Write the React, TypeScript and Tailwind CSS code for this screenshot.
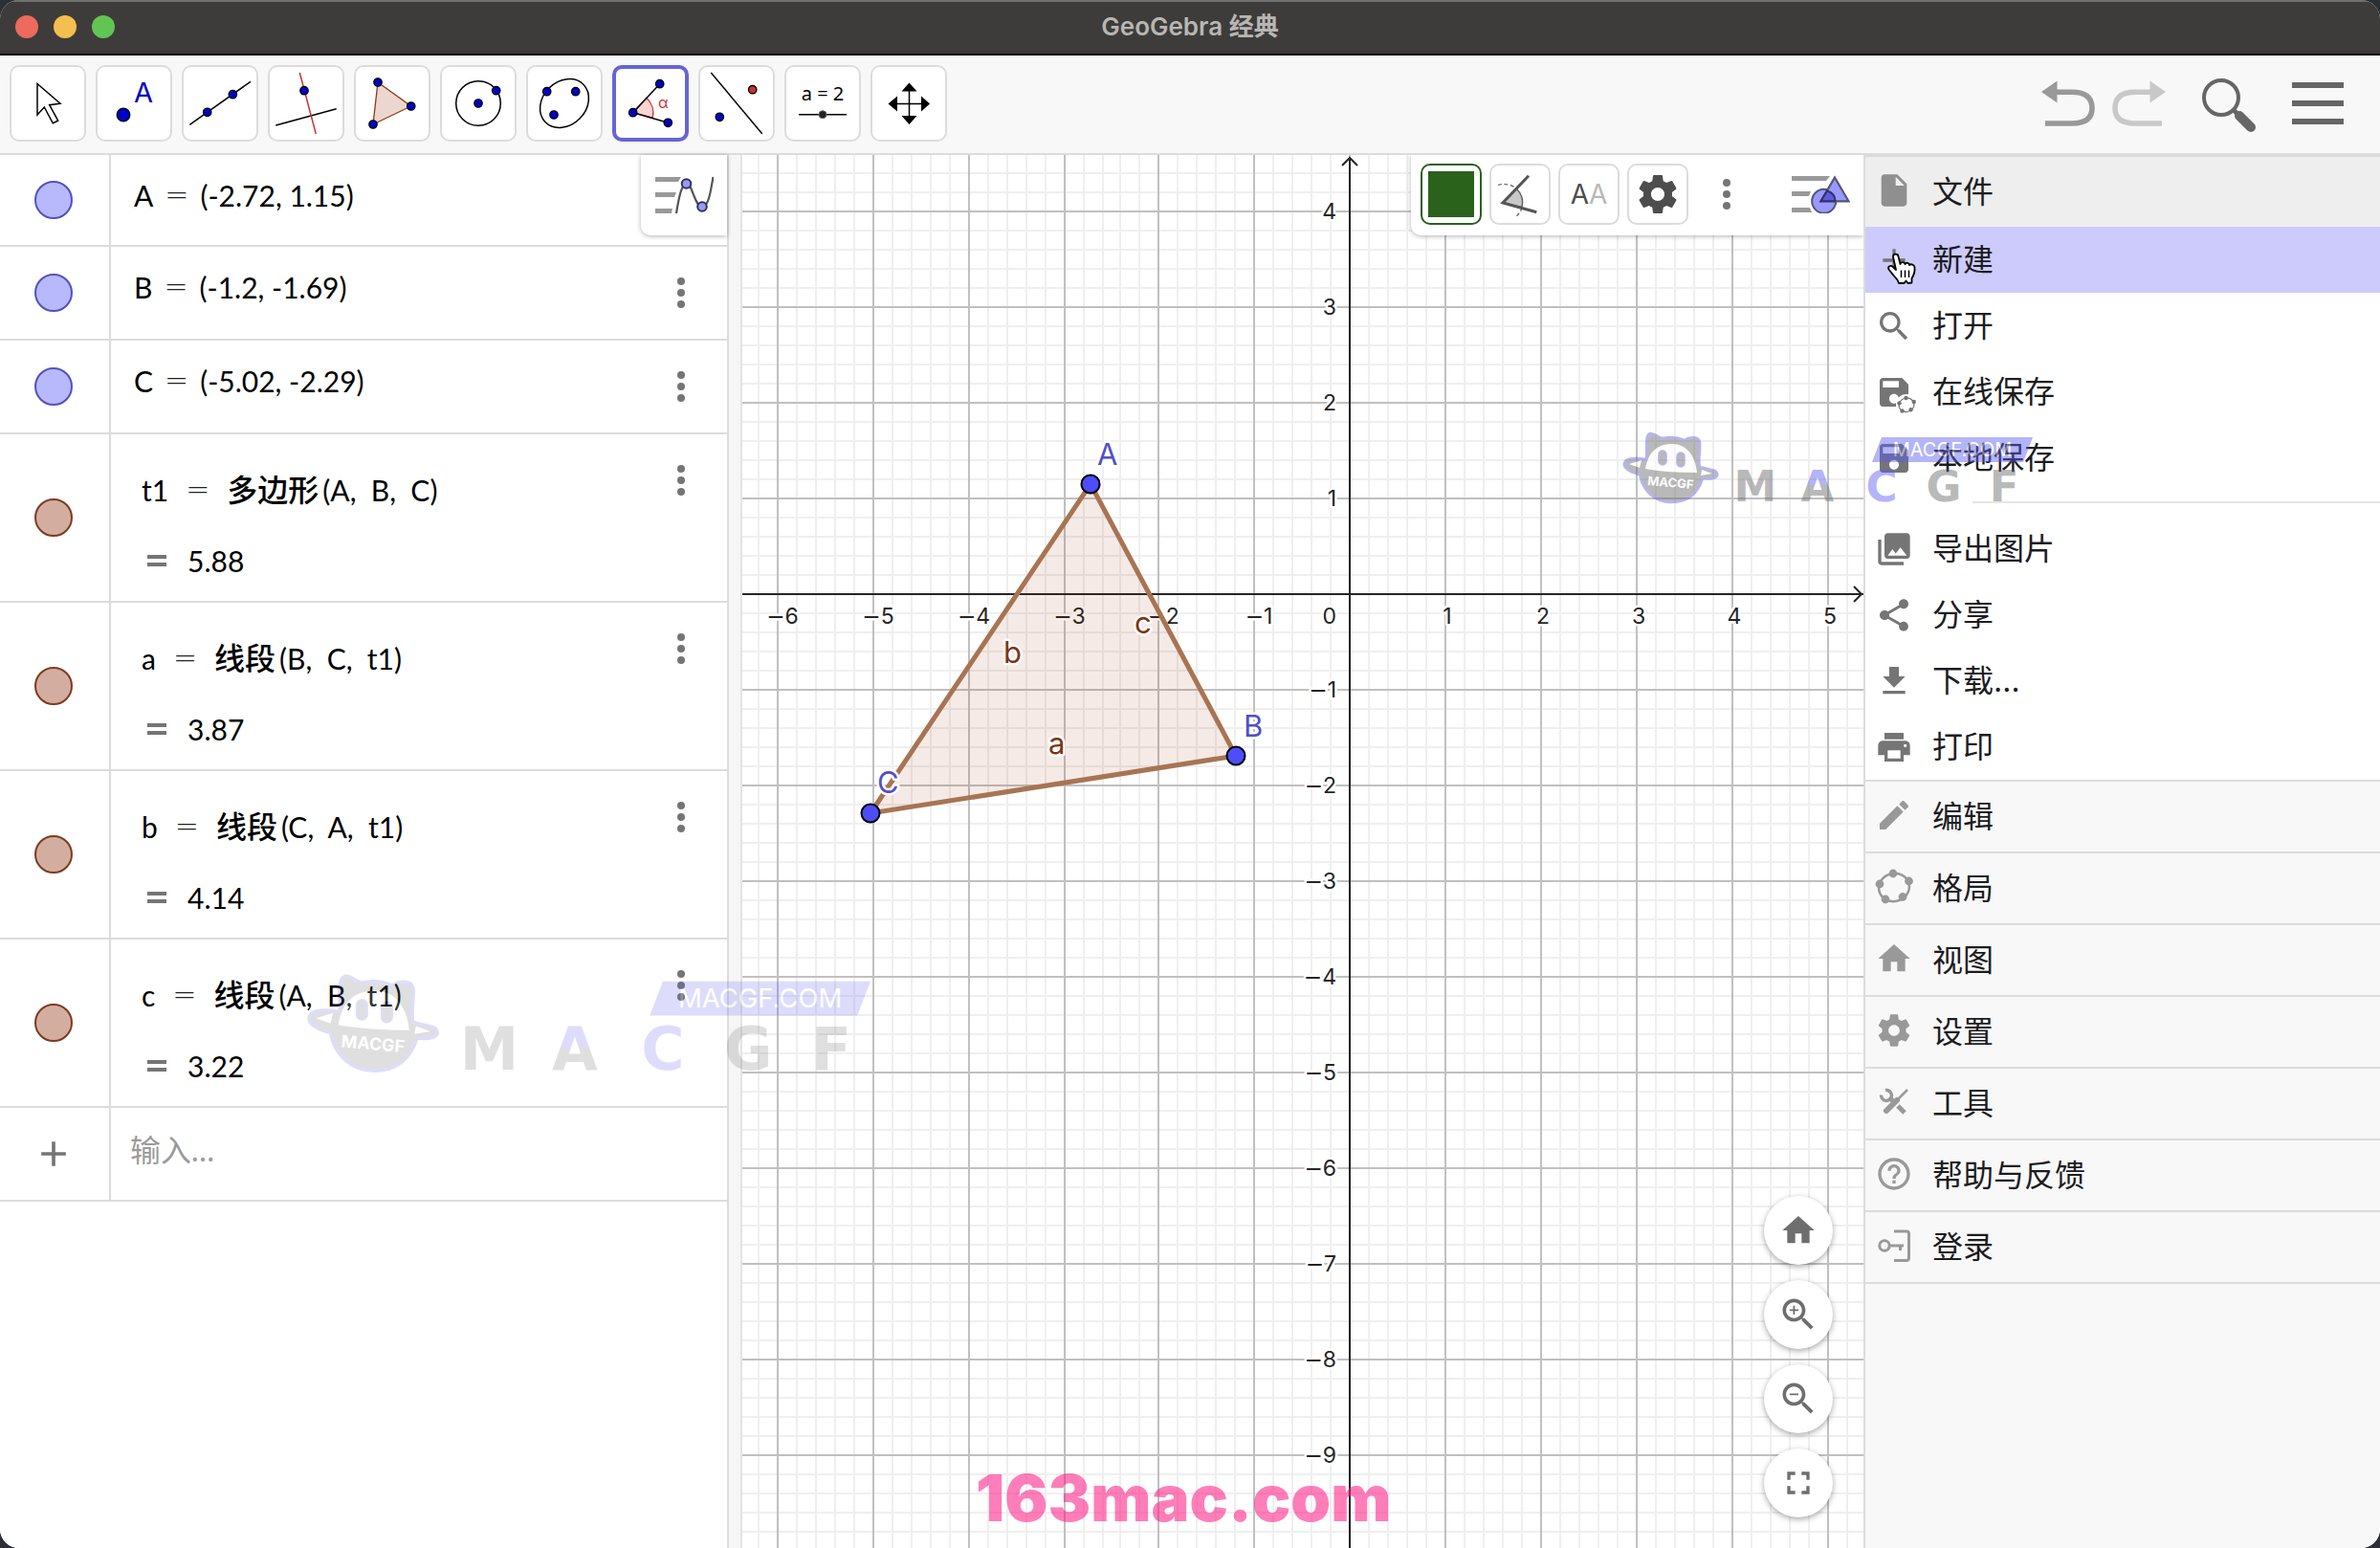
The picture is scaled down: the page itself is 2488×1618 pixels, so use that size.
import type { ReactNode } from 'react';

const PATHS = {
  file: 'M6 2c-1.1 0-1.99.9-1.99 2L4 20c0 1.1.89 2 1.99 2H18c1.1 0 2-.9 2-2V8l-6-6H6zm7 7V3.5L18.5 9H13z',
  add: 'M19 13h-6v6h-2v-6H5v-2h6V5h2v6h6v2z',
  search:
    'M15.5 14h-.79l-.28-.27C15.41 12.59 16 11.11 16 9.5 16 5.91 13.09 3 9.5 3S3 5.91 3 9.5 5.91 16 9.5 16c1.61 0 3.09-.59 4.23-1.57l.27.28v.79l5 4.99L20.49 19l-4.99-5zm-6 0C7.01 14 5 11.99 5 9.5S7.01 5 9.5 5 14 7.01 14 9.5 11.99 14 9.5 14z',
  zoomIn:
    'M15.5 14h-.79l-.28-.27C15.41 12.59 16 11.11 16 9.5 16 5.91 13.09 3 9.5 3S3 5.91 3 9.5 5.91 16 9.5 16c1.61 0 3.09-.59 4.23-1.57l.27.28v.79l5 4.99L20.49 19l-4.99-5zm-6 0C7.01 14 5 11.99 5 9.5S7.01 5 9.5 5 14 7.01 14 9.5 11.99 14 9.5 14zM12 10h-2v2H9v-2H7V9h2V7h1v2h2v1z',
  zoomOut:
    'M15.5 14h-.79l-.28-.27C15.41 12.59 16 11.11 16 9.5 16 5.91 13.09 3 9.5 3S3 5.91 3 9.5 5.91 16 9.5 16c1.61 0 3.09-.59 4.23-1.57l.27.28v.79l5 4.99L20.49 19l-4.99-5zm-6 0C7.01 14 5 11.99 5 9.5S7.01 5 9.5 5 14 7.01 14 9.5 11.99 14 9.5 14zM7 9h5v1H7z',
  save: 'M17 3H5c-1.11 0-2 .9-2 2v14c0 1.1.89 2 2 2h14c1.1 0 2-.9 2-2V7l-4-4zm-5 16c-1.66 0-3-1.34-3-3s1.34-3 3-3 3 1.34 3 3-1.34 3-3 3zm3-10H5V5h10v4z',
  photos:
    'M22 16V4c0-1.1-.9-2-2-2H8c-1.1 0-2 .9-2 2v12c0 1.1.9 2 2 2h12c1.1 0 2-.9 2-2zm-11-4l2.03 2.71L16 11l4 5H8l3-4zM2 6v14c0 1.1.9 2 2 2h14v-2H4V6H2z',
  share:
    'M18 16.08c-.76 0-1.44.3-1.96.77L8.91 12.7c.05-.23.09-.46.09-.7s-.04-.47-.09-.7l7.05-4.11c.54.5 1.25.81 2.04.81 1.66 0 3-1.34 3-3s-1.34-3-3-3-3 1.34-3 3c0 .24.04.47.09.7L8.04 9.81C7.5 9.31 6.79 9 6 9c-1.66 0-3 1.34-3 3s1.34 3 3 3c.79 0 1.5-.31 2.04-.81l7.12 4.16c-.05.21-.08.43-.08.65 0 1.61 1.31 2.92 2.92 2.92s2.92-1.31 2.92-2.92-1.31-2.92-2.92-2.92z',
  download: 'M19 9h-4V3H9v6H5l7 7 7-7zM5 18v2h14v-2H5z',
  print:
    'M19 8H5c-1.66 0-3 1.34-3 3v6h4v4h12v-4h4v-6c0-1.66-1.34-3-3-3zm-3 11H8v-5h8v5zm3-7c-.55 0-1-.45-1-1s.45-1 1-1 1 .45 1 1-.45 1-1 1zm-1-9H6v4h12V3z',
  edit: 'M3 17.25V21h3.75L17.81 9.94l-3.75-3.75L3 17.25zM20.71 7.04c.39-.39.39-1.02 0-1.41l-2.34-2.34c-.39-.39-1.02-.39-1.41 0l-1.83 1.83 3.75 3.75 1.83-1.83z',
  home: 'M10 20v-6h4v6h5v-8h3L12 3 2 12h3v8z',
  settings:
    'M19.43 12.98c.04-.32.07-.64.07-.98s-.03-.66-.07-.98l2.11-1.65c.19-.15.24-.42.12-.64l-2-3.46c-.12-.22-.39-.3-.61-.22l-2.49 1c-.52-.4-1.08-.73-1.69-.98l-.38-2.65C14.46 2.18 14.25 2 14 2h-4c-.25 0-.46.18-.49.42l-.38 2.65c-.61.25-1.17.59-1.69.98l-2.49-1c-.23-.09-.49 0-.61.22l-2 3.46c-.13.22-.07.49.12.64l2.11 1.65c-.04.32-.07.65-.07.98s.03.66.07.98l-2.11 1.65c-.19.15-.24.42-.12.64l2 3.46c.12.22.39.3.61.22l2.49-1c.52.4 1.08.73 1.69.98l.38 2.65c.03.24.24.42.49.42h4c.25 0 .46-.18.49-.42l.38-2.65c.61-.25 1.17-.59 1.69-.98l2.49 1c.23.09.49 0 .61-.22l2-3.46c.12-.22.07-.49-.12-.64l-2.11-1.65zM12 15.5c-1.93 0-3.5-1.57-3.5-3.5s1.57-3.5 3.5-3.5 3.5 1.57 3.5 3.5-1.57 3.5-3.5 3.5z',
  help: 'M11 18h2v-2h-2v2zm1-16C6.48 2 2 6.48 2 12s4.48 10 10 10 10-4.48 10-10S17.52 2 12 2zm0 18c-4.41 0-8-3.59-8-8s3.59-8 8-8 8 3.59 8 8-3.59 8-8 8zm0-14c-2.21 0-4 1.79-4 4h2c0-1.1.9-2 2-2s2 .9 2 2c0 2-3 1.75-3 5h2c0-2.25 3-2.5 3-5 0-2.21-1.79-4-4-4z',
  fullscreen: 'M5 5h5v2H7v3H5zM14 5h5v5h-2V7h-3zM5 14h2v3h3v2H5zM17 14h2v5h-5v-2h3z',
};

function Icon({ name, className }: { name: keyof typeof PATHS; className?: string }) {
  return (
    <svg viewBox="0 0 24 24" fill="currentColor" className={className ?? 'h-10 w-10'}>
      <path d={PATHS[name]} />
    </svg>
  );
}

function Dot({ x, y, r = 4.2, fill = '#0000c8' }: { x: number; y: number; r?: number; fill?: string }) {
  return <circle cx={x} cy={y} r={r} fill={fill} stroke="#000" strokeWidth="1.3" />;
}

/* ---------- Toolbar ---------- */

const tools: { label: string; icon: ReactNode }[] = [
  {
    label: '移动',
    icon: <path d="M29 19.5 53 40.3 41.7 41.7 50.7 58.2 45.3 60.8 36.3 44 29 52Z" fill="#fff" stroke="#000" strokeWidth="1.5" />,
  },
  {
    label: '描点',
    icon: (
      <>
        <Dot x={29} y={52} r={6.8} />
        <text x="40" y="39" fontSize="29" fill="#0000c0">A</text>
      </>
    ),
  },
  {
    label: '直线',
    icon: (
      <>
        <path d="M8.3 62.3 72 17.3" stroke="#000" strokeWidth="1.5" />
        <Dot x={26.7} y={49.3} />
        <Dot x={53.3} y={30.7} />
      </>
    ),
  },
  {
    label: '垂线',
    icon: (
      <>
        <path d="M8.3 63 71.7 45.7" stroke="#000" strokeWidth="1.5" />
        <path d="M33.3 8 50.3 72" stroke="#cc3333" strokeWidth="1.5" />
        <Dot x={38} y={26.7} />
      </>
    ),
  },
  {
    label: '多边形',
    icon: (
      <>
        <path d="M25 18 59.7 43 20 62Z" fill="#ebd7d0" stroke="#8c3c14" strokeWidth="1.3" />
        <Dot x={25} y={18} />
        <Dot x={59.7} y={43} />
        <Dot x={20} y={62} />
      </>
    ),
  },
  {
    label: '圆',
    icon: (
      <>
        <circle cx="40" cy="40" r="23.3" fill="none" stroke="#000" strokeWidth="1.5" />
        <Dot x={40} y={40} />
        <Dot x={58.7} y={26.7} />
      </>
    ),
  },
  {
    label: '椭圆',
    icon: (
      <>
        <ellipse cx="40" cy="40" rx="28" ry="22.6" transform="rotate(-45 40 40)" fill="none" stroke="#000" strokeWidth="1.5" />
        <Dot x={21.7} y={27.7} />
        <Dot x={51.7} y={27.7} />
        <Dot x={29} y={52} />
      </>
    ),
  },
  {
    label: '角度',
    icon: (
      <>
        <path d="M21.7 49.7 36 34.4A21 21 0 0 1 42.2 55.2Z" fill="#fcd4d0" stroke="#cc3333" strokeWidth="1.3" />
        <path d="M49.7 19.7 21.7 49.7 58.3 60.3" fill="none" stroke="#000" strokeWidth="1.5" />
        <Dot x={21.7} y={49.7} />
        <Dot x={49.7} y={19.7} />
        <Dot x={58.3} y={60.3} />
        <text x="48" y="45" fontSize="16" fill="#cc3333">α</text>
      </>
    ),
  },
  {
    label: '轴对称',
    icon: (
      <>
        <path d="M13.3 8 66.7 71.7" stroke="#000" strokeWidth="1.5" />
        <Dot x={56.7} y={25.7} fill="#c83232" />
        <Dot x={22.3} y={54.3} />
      </>
    ),
  },
  {
    label: '滑动条',
    icon: (
      <>
        <text x="40" y="37" fontSize="20" textAnchor="middle" fill="#000" className="font-['Noto_Sans',sans-serif]">a = 2</text>
        <path d="M15 51.7H65" stroke="#000" strokeWidth="1.5" />
        <circle cx="40" cy="51.7" r="4" fill="#222" stroke="#666" />
      </>
    ),
  },
  {
    label: '平移视图',
    icon: (
      <>
        <path d="M40.5 22V60M22 40.5H60" stroke="#000" strokeWidth="1.5" />
        <path d="M40.5 18.5 48.5 27.5H32.5ZM40.5 62 48.5 53H32.5ZM18.5 40.5 28 32.5V48.5ZM62 40.5 53 32.5V48.5Z" />
      </>
    ),
  },
];

function Toolbar() {
  return (
    <header className="flex items-center justify-between border-b-2 border-[#dcdcdc] bg-[#f8f8f8] pt-2.5 pr-[38px] pb-3 pl-2.5">
      <div className="flex gap-2.5">
        {tools.map((t) => (
          <button
            key={t.label}
            aria-label={t.label}
            className={
              t.label === '角度'
                ? 'flex h-20 w-20 items-center justify-center rounded-[10px] border-4 border-[#6565d6] bg-white'
                : 'flex h-20 w-20 items-center justify-center rounded-[10px] border-2 border-[#dcdcdc] bg-white'
            }
          >
            <svg viewBox="0 0 80 80" className="h-20 w-20 shrink-0 font-['Inter',sans-serif]">
              {t.icon}
            </svg>
          </button>
        ))}
      </div>
      <div className="flex items-center">
        <button aria-label="撤销" className="mr-4">
          <svg viewBox="0 0 60 52" className="h-[52px] w-[60px]">
            <path d="M2 14 18.5 2.5V25.5Z" fill="#999" />
            <path d="M17 14.3H34C48 14.3 55 20 55 31S48 47 34 47H6" fill="none" stroke="#999" strokeWidth="5.6" />
          </svg>
        </button>
        <button aria-label="重做" className="mr-8">
          <svg viewBox="0 0 60 52" className="h-[52px] w-[60px]">
            <path d="M56 14 39.5 2.5V25.5Z" fill="#c8c8c8" />
            <path d="M41 14.3H24C10 14.3 3 20 3 31S10 47 24 47H52" fill="none" stroke="#c8c8c8" strokeWidth="5.6" />
          </svg>
        </button>
        <button aria-label="搜索" className="mr-9">
          <svg viewBox="0 0 60 60" className="h-[60px] w-[60px]">
            <circle cx="22" cy="24" r="18" fill="none" stroke="#666" strokeWidth="4" />
            <path d="M34 36 42 44" stroke="#666" strokeWidth="5" />
            <path d="M41 43 53 55" stroke="#666" strokeWidth="10" strokeLinecap="round" />
          </svg>
        </button>
        <button aria-label="菜单" className="flex flex-col gap-[13px]">
          <span className="h-1.5 w-[54px] bg-[#666]" />
          <span className="h-1.5 w-[54px] bg-[#666]" />
          <span className="h-1.5 w-[54px] bg-[#666]" />
        </button>
      </div>
    </header>
  );
}

/* ---------- Algebra view ---------- */

const points = [
  { name: 'A', value: '(-2.72, 1.15)' },
  { name: 'B', value: '(-1.2, -1.69)' },
  { name: 'C', value: '(-5.02, -2.29)' },
];

const commands = [
  { name: 't1', command: '多边形', args: ['A', 'B', 'C'], value: '5.88' },
  { name: 'a', command: '线段', args: ['B', 'C', 't1'], value: '3.87' },
  { name: 'b', command: '线段', args: ['C', 'A', 't1'], value: '4.14' },
  { name: 'c', command: '线段', args: ['A', 'B', 't1'], value: '3.22' },
];

function Equals() {
  return <span className="font-['DejaVu_Sans',sans-serif] font-extralight text-[#222]">=</span>;
}

function MoreDots() {
  return (
    <svg viewBox="0 0 8 32" className="h-8 w-2" fill="#757575">
      <circle cx="4" cy="4" r="4" />
      <circle cx="4" cy="16" r="4" />
      <circle cx="4" cy="28" r="4" />
    </svg>
  );
}

function Marble({ name, tone }: { name: string; tone: string }) {
  return (
    <div className="flex w-[116px] shrink-0 items-center justify-center border-r-2 border-[#dcdcdc] pr-0.5">
      <button aria-label={`显示 ${name}`} className={`h-10 w-10 rounded-full border-2 ${tone}`} />
    </div>
  );
}

function AlgebraView() {
  return (
    <section className="relative w-[762px] shrink-0 border-r-2 border-[#dcdcdc] bg-white font-['Lato','Noto_Sans_CJK_SC',sans-serif] text-[30px] text-black">
      {points.map((p, i) => (
        <div key={p.name} className={i === 0 ? 'flex h-24 border-b-2 border-[#dcdcdc]' : 'flex h-[98px] border-b-2 border-[#dcdcdc]'}>
          <Marble name={p.name} tone="border-[#5252c0] bg-[#b8b8fc]" />
          <div className="flex flex-1 gap-3 pt-5 pl-6 leading-[44px]">
            <span>{p.name}</span>
            <Equals />
            <span>{p.value}</span>
          </div>
          {i > 0 && (
            <button aria-label="更多" className="mr-11 self-center">
              <MoreDots />
            </button>
          )}
        </div>
      ))}
      {commands.map((c) => (
        <div key={c.name} className="flex h-44 border-b-2 border-[#dcdcdc]">
          <Marble name={c.name} tone="border-[#7c3c20] bg-[#d3aea0]" />
          <div className="flex flex-1 flex-col gap-[30px] pt-9 pl-8 leading-[44px]">
            <div className="flex gap-[18px]">
              <span>{c.name}</span>
              <Equals />
              <div className="flex gap-1">
                <span className="text-[32px] font-medium">{c.command}</span>
                <span>({c.args.join(',\u00a0 ')})</span>
              </div>
            </div>
            <div className="flex items-center gap-[22px] pl-1.5">
              <span className="h-3 w-5 border-y-4 border-[#757575]" />
              <span>{c.value}</span>
            </div>
          </div>
          <button aria-label="更多" className="mt-8 mr-11 self-start">
            <MoreDots />
          </button>
        </div>
      ))}
      <div className="flex h-[98px] border-b-2 border-[#dcdcdc]">
        <div className="flex w-[116px] shrink-0 items-center justify-center border-r-2 border-[#dcdcdc] pr-0.5 text-[#757575]">
          <Icon name="add" className="h-11 w-11" />
        </div>
        <input aria-label="输入" placeholder="输入…" className="mb-2 w-full px-5 text-[32px] outline-none placeholder:text-[#9a9a9a]" />
      </div>

      {/* Style bar toggle */}
      <button
        aria-label="代数区样式"
        className="absolute top-0 right-0 flex h-[84px] w-[90px] items-center justify-center rounded-bl-[10px] bg-white shadow-[0_1px_5px_rgba(0,0,0,0.3)]"
      >
        <svg viewBox="0 0 61 40" className="h-10 w-[61px]">
          <path d="M0 1H27L24 6H0ZM0 17H22L20 22H0ZM0 34H18L17 39H0Z" fill="#999" />
          <path d="M22 39C25 20 28 8 32.5 8 39 8 41 32 49 32 56 32 58 15 60.5 1" fill="none" stroke="#555" strokeWidth="2.2" />
          <circle cx="32.5" cy="8" r="4.8" fill="#9999ff" stroke="#333355" strokeWidth="2" />
          <circle cx="49" cy="32" r="4.8" fill="#9999ff" stroke="#333355" strokeWidth="2" />
        </svg>
      </button>
    </section>
  );
}

/* ---------- Graphics view ---------- */

const ORIGIN_X = 635;
const ORIGIN_Y = 459;
const UNIT_X = 99.8;
const UNIT_Y = 100;

// snap to the 2px device grid so that lines stay crisp
const gridX = (n: number) => ORIGIN_X + 2 * Math.round((n * UNIT_X + 0.5) / 2);
const gridY = (n: number) => ORIGIN_Y - n * UNIT_Y;

const range = (from: number, to: number) => Array.from({ length: to - from + 1 }, (_, i) => from + i);

function label(n: number) {
  if (n >= 0) return n;
  return (
    <>
      <tspan className="font-['DejaVu_Sans',sans-serif]">−</tspan>
      {-n}
    </>
  );
}

const A = [364, 344];
const B = [516, 628];
const C = [134, 688];

function Graph() {
  return (
    <svg className="absolute inset-0 h-full w-full font-['Inter',sans-serif]">
      {range(-31, 32).map((n) => (
        <line key={n} x1={gridX(n / 5)} x2={gridX(n / 5)} y1="0" y2="100%" stroke="#efefef" strokeWidth="2" />
      ))}
      {range(-60, 22).map((n) => (
        <line key={n} x1="0" x2="100%" y1={gridY(n / 5)} y2={gridY(n / 5)} stroke="#efefef" strokeWidth="2" />
      ))}
      {range(-6, 6).map((n) => (
        <line key={n} x1={gridX(n)} x2={gridX(n)} y1="0" y2="100%" stroke="#c0c0c0" strokeWidth="2" />
      ))}
      {range(-11, 4).map((n) => (
        <line key={n} x1="0" x2="100%" y1={gridY(n)} y2={gridY(n)} stroke="#c0c0c0" strokeWidth="2" />
      ))}

      <g stroke="#252525" strokeWidth="2" fill="none">
        <line x1={ORIGIN_X} x2={ORIGIN_X} y1="2" y2="100%" />
        <line x1="0" x2="100%" y1={ORIGIN_Y} y2={ORIGIN_Y} />
        <path d={`M${ORIGIN_X - 8} 11 ${ORIGIN_X} 3 ${ORIGIN_X + 8} 11`} />
      </g>
      <svg x="100%" y={ORIGIN_Y} overflow="visible">
        <path d="M-10 -8 -2 0 -10 8" stroke="#252525" strokeWidth="2" fill="none" />
      </svg>

      <g fontSize="23" fill="#252525" stroke="#fff" strokeWidth="5" strokeLinejoin="round" paintOrder="stroke">
        {range(-6, -1).map((n) => (
          <text key={n} x={gridX(n) + 5} y={ORIGIN_Y + 31} textAnchor="middle">{label(n)}</text>
        ))}
        {range(1, 5).map((n) => (
          <text key={n} x={gridX(n) + 2} y={ORIGIN_Y + 31} textAnchor="middle">{label(n)}</text>
        ))}
        <text x={ORIGIN_X - 14} y={ORIGIN_Y + 31} textAnchor="end">0</text>
        {range(-9, 4)
          .filter((n) => n !== 0)
          .map((n) => (
            <text key={n} x={ORIGIN_X - 14} y={gridY(n) + 8} textAnchor="end">{label(n)}</text>
          ))}
      </g>

      <polygon points={`${A} ${B} ${C}`} fill="#993300" fillOpacity="0.1" />
      <polygon points={`${A} ${B} ${C}`} fill="none" stroke="#a87453" strokeWidth="5" />
      <g fontSize="31" stroke="#fff" strokeWidth="5" strokeLinejoin="round" paintOrder="stroke">
        <g fill="#7d3516">
          <text x="320" y="626">a</text>
          <text x="273" y="531">b</text>
          <text x="410" y="500">c</text>
        </g>
        <g fill="#5050c8">
          <text x="371" y="324">A</text>
          <text x="524" y="608">B</text>
          <text x="141" y="667">C</text>
        </g>
      </g>
      {[A, B, C].map(([x, y]) => (
        <circle key={x} cx={x} cy={y} r="9.5" fill="#4d4dff" stroke="#000" strokeWidth="2" />
      ))}
    </svg>
  );
}

const squareButton = 'flex h-16 w-16 items-center justify-center rounded-[10px] border-2 border-[#dcdcdc] bg-white';

function GraphStyleBar() {
  return (
    <div className="absolute top-0 right-0 flex h-[84px] items-center gap-2 rounded-bl-[10px] bg-white pr-3.5 pb-0.5 pl-2.5 shadow-[0_1px_5px_rgba(0,0,0,0.3)]">
      <button aria-label="颜色" className="flex h-16 w-16 items-center justify-center rounded-[10px] border-2 border-[#2a611b] bg-white">
        <span className="h-12 w-12 bg-[#2a611b]" />
      </button>
      <button aria-label="角度样式" className={squareButton}>
        <svg viewBox="0 0 64 64" className="h-16 w-16 shrink-0">
          <path d="M14 41 28.3 26.2A20.5 20.5 0 0 1 34 45.8Z" fill="#c8c8c8" stroke="#666" strokeWidth="1.5" />
          <path d="M9 22.5A20 20 0 0 1 28 26M34 46A20 20 0 0 1 27 56" fill="none" stroke="#777" strokeWidth="1.5" strokeDasharray="4 2.5" />
          <path d="M41 12.7 14 41 49.3 50.7" fill="none" stroke="#555" strokeWidth="3" />
        </svg>
      </button>
      <button aria-label="文字大小" className={`${squareButton} font-['Inter',sans-serif] text-[28px] text-[#4d4d4d]`}>
        A<span className="text-[#b8b8b8]">A</span>
      </button>
      <button aria-label="设置" className={`${squareButton} text-[#4d4d4d]`}>
        <Icon name="settings" className="h-12 w-12 shrink-0" />
      </button>
      <button aria-label="更多" className="flex w-16 justify-center">
        <MoreDots />
      </button>
      <button aria-label="绘图区样式" className="pl-7">
        <svg viewBox="0 0 61 40" className="h-10 w-[61px]">
          <path d="M0 1H40L36 6H0ZM0 17H20L18 22H0ZM0 34H19L21 39H0Z" fill="#999" />
          <circle cx="33.7" cy="27.3" r="12.5" fill="#9999ff" stroke="#555577" strokeWidth="2" />
          <path d="M45 2.5 59.5 27.3H30.5Z" fill="#9999ff" stroke="#555577" strokeWidth="2.2" />
          <path d="M45.5 27.3H30.5L37 16.5C42 18 45.5 22 45.5 27.3Z" fill="#5c5ce0" stroke="#333366" strokeWidth="2" />
        </svg>
      </button>
    </div>
  );
}

const zoomButtons: { label: string; icon: keyof typeof PATHS }[] = [
  { label: '标准视图', icon: 'home' },
  { label: '放大', icon: 'zoomIn' },
  { label: '缩小', icon: 'zoomOut' },
  { label: '全屏', icon: 'fullscreen' },
];

function GraphicsView() {
  return (
    <section className="relative flex-1 overflow-hidden bg-white">
      <Graph />
      <GraphStyleBar />
      <div className="absolute right-8 bottom-8 flex flex-col gap-4">
        {zoomButtons.map((b) => (
          <button
            key={b.label}
            aria-label={b.label}
            className="flex h-[72px] w-[72px] items-center justify-center rounded-full bg-white text-[#6e6e6e] shadow-[0_2px_6px_rgba(0,0,0,0.35)]"
          >
            <Icon name={b.icon} className={b.icon === 'fullscreen' || b.icon === 'home' ? 'h-10 w-10' : 'h-11 w-11'} />
          </button>
        ))}
      </div>
    </section>
  );
}

/* ---------- Menu ---------- */

function LayoutIcon({ className }: { className: string }) {
  return (
    <svg viewBox="0 0 40 40" className={className} fill="currentColor">
      <ellipse cx="20" cy="20.5" rx="16" ry="14.5" fill="none" stroke="currentColor" strokeWidth="2.5" transform="rotate(-15 20 20.5)" />
      <circle cx="19" cy="6" r="4.4" />
      <circle cx="35.5" cy="14" r="4.4" />
      <circle cx="29" cy="30.5" r="4.4" />
      <circle cx="11" cy="33" r="4.4" />
      <circle cx="5" cy="17" r="4.4" />
    </svg>
  );
}

const onlineSaveIcon = (
  <span className="relative">
    <Icon name="save" />
    <span className="absolute -right-1 -bottom-1 rounded-full bg-white p-px">
      <LayoutIcon className="h-5 w-5" />
    </span>
  </span>
);

const toolsIcon = (
  <svg viewBox="0 0 40 40" className="h-10 w-10" fill="none" stroke="currentColor">
    <path d="M11 7.5A5.5 5.5 0 1 1 6.5 12.5" strokeWidth="3.5" />
    <path d="M15 15 19 19M24 24 31 31" strokeWidth="5" />
    <path d="M34 7 23 18" strokeWidth="2.5" />
    <path d="M23 18 12 29" strokeWidth="6" strokeLinecap="round" />
  </svg>
);

const loginIcon = (
  <svg viewBox="0 0 40 40" className="h-10 w-10" fill="none" stroke="currentColor" strokeWidth="3">
    <path d="M20 5H33Q35.5 5 35.5 7.5V33Q35.5 35.5 33 35.5H20" />
    <circle cx="10" cy="20" r="5.2" />
    <path d="M15 20H30M26.5 20V25" />
  </svg>
);

const fileItems: { label: string; icon: ReactNode; gap?: boolean }[] = [
  { label: '打开', icon: <Icon name="search" /> },
  { label: '在线保存', icon: onlineSaveIcon },
  { label: '本地保存', icon: <Icon name="save" /> },
  { label: '导出图片', icon: <Icon name="photos" />, gap: true },
  { label: '分享', icon: <Icon name="share" /> },
  { label: '下载…', icon: <Icon name="download" /> },
  { label: '打印', icon: <Icon name="print" /> },
];

const sections: { label: string; icon: ReactNode }[] = [
  { label: '编辑', icon: <Icon name="edit" /> },
  { label: '格局', icon: <LayoutIcon className="h-10 w-10" /> },
  { label: '视图', icon: <Icon name="home" /> },
  { label: '设置', icon: <Icon name="settings" /> },
  { label: '工具', icon: toolsIcon },
  { label: '帮助与反馈', icon: <Icon name="help" /> },
  { label: '登录', icon: loginIcon },
];

function HandCursor() {
  return (
    <svg viewBox="0 0 32 34" className="absolute top-3 left-3 h-[34px] w-8">
      <path
        d="M7 4.5C7 1 12 .5 12.5 4L14.5 12C15 9.5 19 9.5 19.5 12 20.5 10 24 10.5 24 13 25.5 11.5 29.5 12.5 29.5 15.5 30 20 29 23 26.5 27V31.5L22.5 32 20.5 29.5 18.5 32H13L11.5 28.5C8 24.5 5 21 2.5 17.5 1 14.5 4.5 12.5 7 15L10 18Z"
        fill="#fff"
        stroke="#000"
        strokeWidth="1.8"
        strokeLinejoin="round"
      />
      <path d="M15.5 18.5V26M19.5 18.5V26M23.5 18.5V26" stroke="#000" strokeWidth="1.5" />
    </svg>
  );
}

function Menu() {
  return (
    <nav className="w-[540px] shrink-0 border-l-2 border-[#dcdcdc] bg-[#f8f8f8] text-[32px] leading-10 text-[#1c1c1f]">
      <button className="flex h-[75px] w-full items-center gap-5 border-t-2 border-[#dcdcdc] bg-[#eee] px-2.5">
        <Icon name="file" className="mb-1 h-10 w-10 text-[#8f8f8f]" />
        文件
      </button>
      <div className="border-b-2 border-[#dcdcdc] bg-white">
        <button className="flex h-[69px] w-full items-center gap-5 bg-[#cccbfb] px-2.5">
          <span className="relative text-[#757575]">
            <Icon name="add" />
            <HandCursor />
          </span>
          新建
        </button>
        {fileItems.map((item) => (
          <div key={item.label}>
            {item.gap && <hr className="mt-[11px] mb-[13px] ml-[112px] border-t-2 border-[#e6e6e6]" />}
            <button className="flex h-[69px] w-full items-center gap-5 px-2.5">
              <span className="text-[#757575]">{item.icon}</span>
              {item.label}
            </button>
          </div>
        ))}
      </div>
      {sections.map((s) => (
        <button key={s.label} className="flex h-[75px] w-full items-center gap-5 border-b-2 border-[#dcdcdc] px-2.5">
          <span className="mb-1 text-[#999]">{s.icon}</span>
          {s.label}
        </button>
      ))}
    </nav>
  );
}

/* ---------- Watermarks ---------- */

function MacgfMark({ className, id }: { className: string; id: string }) {
  return (
    <svg viewBox="0 0 428 75" overflow="visible" className={className}>
      <defs>
        <linearGradient id={id} x1="0" y1="0" x2="0" y2="1">
          <stop offset="48%" stopColor="#5a5af0" />
          <stop offset="48%" stopColor="#666" />
        </linearGradient>
      </defs>
      <g strokeLinejoin="round">
        <path
          d="M24 28C25 17 22 3 28 1 32 0 36 5 41 6 49 4 57 5 64 8 69 4 79 4 80 10 81 18 78 28 80 36L96 40C101 44 99 50 83 48 78 64 67 73 50 73 32 73 20 60 17 44 3 41-3 34 3 29 8 26 16 27 24 28Z"
          fill="#666"
          stroke="#5a5af0"
          strokeWidth="2.5"
        />
        <path d="M23 38C26 20 36 12 51 12 66 12 75 24 77 42 58 42 40 41 23 38Z" fill="#fff" />
        <path d="M6 33 19 29 17 37ZM82 39 93 43 81 45Z" fill="#fff" />
        <rect x="37" y="19" width="8" height="15" rx="4" fill="#666" stroke="#5a5af0" strokeWidth="1.5" />
        <rect x="56" y="21" width="8" height="15" rx="4" fill="#666" stroke="#5a5af0" strokeWidth="1.5" />
      </g>
      <text x="49" y="57" fontSize="13" fontWeight="700" fill="#fff" textAnchor="middle" transform="rotate(5 49 57)">MACGF</text>
      <path d="M270 5H428L418 31H260Z" fill="#5a5af0" />
      <text x="344" y="25" fontSize="20" fill="#fff" textAnchor="middle">MACGF.COM</text>
      <g fontSize="45" fontWeight="700" fill="#666" textAnchor="middle" className="font-['DejaVu_Sans',sans-serif]">
        <text x="138" y="72">M</text>
        <text x="203" y="72" fill={`url(#${id})`}>A</text>
        <text x="270" y="72" fill="#5a5af0">C</text>
        <text x="335" y="72">G</text>
        <text x="398" y="72">F</text>
      </g>
    </svg>
  );
}

export default function App() {
  return (
    <div className="bg-[#2a3036] font-['Inter','Noto_Sans_CJK_SC',sans-serif]">
      <div className="relative flex min-h-screen flex-col overflow-hidden rounded-[20px] bg-white">
        <div className="relative flex h-[58px] items-center justify-center border-t-2 border-b-2 border-t-[#73716f] border-b-black bg-[#3e3c3a] pb-0.5">
          <div className="absolute left-4 flex gap-4">
            <button aria-label="关闭" className="h-6 w-6 rounded-full bg-[#ec6a5e]" />
            <button aria-label="最小化" className="h-6 w-6 rounded-full bg-[#f4bf4f]" />
            <button aria-label="缩放" className="h-6 w-6 rounded-full bg-[#61c554]" />
          </div>
          <h1 className="text-[26px] leading-8 font-semibold text-[#b8b6b4]">GeoGebra 经典</h1>
        </div>
        <Toolbar />
        <main className="flex flex-1">
          <AlgebraView />
          <div className="w-3.5 shrink-0 border-r-2 border-[#e4e4e4] bg-[#f6f6f6]" />
          <GraphicsView />
          <Menu />
        </main>

        <MacgfMark id="mark-left" className="pointer-events-none absolute top-[1019px] left-[322px] w-[588px] opacity-20" />
        <MacgfMark id="mark-right" className="pointer-events-none absolute top-[452px] left-[1697px] w-[428px] opacity-45" />
        <p className="pointer-events-none absolute bottom-3.5 left-[1020px] text-[67px] leading-[76px] font-black text-[#ff1480]/55">163mac.com</p>
      </div>
    </div>
  );
}
